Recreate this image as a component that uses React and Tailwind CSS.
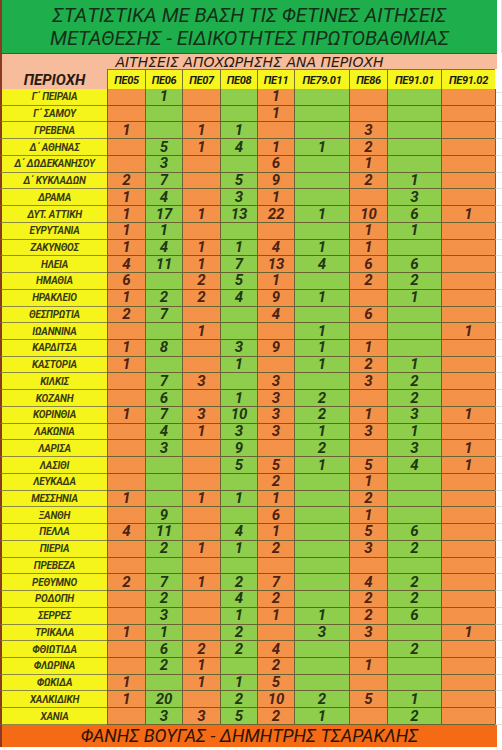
import React from "react";

const COLS = ["ΠΕ05", "ΠΕ06", "ΠΕ07", "ΠΕ08", "ΠΕ11", "ΠΕ79.01", "ΠΕ86", "ΠΕ91.01", "ΠΕ91.02"];

const ROWS = [
  ["Γ΄ ΠΕΙΡΑΙΑ", ",1,,,1,,,,"],
  ["Γ΄ ΣΑΜΟΥ", ",,,,1,,,,"],
  ["ΓΡΕΒΕΝΑ", "1,,1,1,,,3,,"],
  ["Δ΄ ΑΘΗΝΑΣ", ",5,1,4,1,1,2,,"],
  ["Δ΄ ΔΩΔΕΚΑΝΗΣΟΥ", ",3,,,6,,1,,"],
  ["Δ΄ ΚΥΚΛΑΔΩΝ", "2,7,,5,9,,2,1,"],
  ["ΔΡΑΜΑ", "1,4,,3,1,,,3,"],
  ["ΔΥΤ. ΑΤΤΙΚΗ", "1,17,1,13,22,1,10,6,1"],
  ["ΕΥΡΥΤΑΝΙΑ", "1,1,,,,,1,1,"],
  ["ΖΑΚΥΝΘΟΣ", "1,4,1,1,4,1,1,,"],
  ["ΗΛΕΙΑ", "4,11,1,7,13,4,6,6,"],
  ["ΗΜΑΘΙΑ", "6,,2,5,1,,2,2,"],
  ["ΗΡΑΚΛΕΙΟ", "1,2,2,4,9,1,,1,"],
  ["ΘΕΣΠΡΩΤΙΑ", "2,7,,,4,,6,,"],
  ["ΙΩΑΝΝΙΝΑ", ",,1,,,1,,,1"],
  ["ΚΑΡΔΙΤΣΑ", "1,8,,3,9,1,1,,"],
  ["ΚΑΣΤΟΡΙΑ", "1,,,1,,1,2,1,"],
  ["ΚΙΛΚΙΣ", ",7,3,,3,,3,2,"],
  ["ΚΟΖΑΝΗ", ",6,,1,3,2,,2,"],
  ["ΚΟΡΙΝΘΙΑ", "1,7,3,10,3,2,1,3,1"],
  ["ΛΑΚΩΝΙΑ", ",4,1,3,3,1,3,1,"],
  ["ΛΑΡΙΣΑ", ",3,,9,,2,,3,1"],
  ["ΛΑΣΙΘΙ", ",,,5,5,1,5,4,1"],
  ["ΛΕΥΚΑΔΑ", ",,,,2,,1,,"],
  ["ΜΕΣΣΗΝΙΑ", "1,,1,1,1,,2,,"],
  ["ΞΑΝΘΗ", ",9,,,6,,1,,"],
  ["ΠΕΛΛΑ", "4,11,,4,1,,5,6,"],
  ["ΠΙΕΡΙΑ", ",2,1,1,2,,3,2,"],
  ["ΠΡΕΒΕΖΑ", ",,,,,,,,"],
  ["ΡΕΘΥΜΝΟ", "2,7,1,2,7,,4,2,"],
  ["ΡΟΔΟΠΗ", ",2,,4,2,,2,2,"],
  ["ΣΕΡΡΕΣ", ",3,,1,1,1,2,6,"],
  ["ΤΡΙΚΑΛΑ", "1,1,,2,,3,3,,1"],
  ["ΦΘΙΩΤΙΔΑ", ",6,2,2,4,,,2,"],
  ["ΦΛΩΡΙΝΑ", ",2,1,,2,,1,,"],
  ["ΦΩΚΙΔΑ", "1,,1,1,5,,,,"],
  ["ΧΑΛΚΙΔΙΚΗ", "1,20,,2,10,2,5,1,"],
  ["ΧΑΝΙΑ", ",3,3,5,2,1,,2,"],
];

const GRID = "grid grid-cols-[107px_38px_37px_38px_37px_37px_55px_38px_54px_54px_minmax(0,1fr)]";

export default function App() {
  return (
    <div
      className="w-[502px] h-[750px] bg-white overflow-hidden"
      style={{ fontFamily: "Roboto, 'Noto Sans', sans-serif" }}
    >
      <div className="flex flex-col h-[747px]">
        {/* Title */}
        <div className="flex">
          <div className="w-[497px] h-[53px] bg-[#1fae4c] border-l-2 border-[#8a3a22] flex flex-col items-center justify-center text-[#14301a] italic text-[20px] leading-[23px]">
            <div>ΣΤΑΤΙΣΤΙΚΑ ΜΕ ΒΑΣΗ ΤΙΣ ΦΕΤΙΝΕΣ ΑΙΤΗΣΕΙΣ</div>
            <div>ΜΕΤΑΘΕΣΗΣ - ΕΙΔΙΚΟΤΗΤΕΣ ΠΡΩΤΟΒΑΘΜΙΑΣ</div>
          </div>
          <div className="flex-1 border-r border-[#e2e2e2]" />
        </div>
        {/* Subtitle */}
        <div className="flex">
          <div
            className="w-[497px] h-[16px] bg-[#f6bc9c] border-l-2 border-[#8a3a22] border-t border-[#7a5a40] flex items-center justify-center italic text-[14px] leading-none text-[#2a1a10]"
            style={{ fontFamily: "'DejaVu Sans', sans-serif" }}
          >
            ΑΙΤΗΣΕΙΣ ΑΠΟΧΩΡΗΣΗΣ ΑΝΑ ΠΕΡΙΟΧΗ
          </div>
          <div className="flex-1" />
        </div>
        {/* Column header */}
        <div className={`${GRID} h-[20px]`}>
          <div className="bg-[#f6bc9c] border-l-2 border-[#8a3a22] flex items-center justify-center italic font-bold text-[15px] text-[#2a1a10] border-b border-[#6b5a30]">
            ΠΕΡΙΟΧΗ
          </div>
          {COLS.map((c) => (
            <div
              key={c}
              className="bg-[#f6f61e] border-l border-b border-t border-[#7a7530] flex items-center justify-center italic font-bold text-[11px] text-[#1a1a10] tracking-[-0.3px]"
            >
              {c}
            </div>
          ))}
          <div className="border-b border-[#e2e2e2]" />
        </div>
        {/* Data */}
        <div className="flex flex-col h-[636px]">
          {ROWS.map(([name, vals]) => {
            const v = vals.split(",");
            return (
              <div key={name} className={`${GRID} flex-1 min-h-0`}>
                <div className="bg-[#f5f51c] border-l-2 border-[#8a3a22] border-b border-b-[#8a8a40] flex items-center justify-center italic font-bold text-[10px] text-[#3a3a12] tracking-[-0.2px]">
                  {name}
                </div>
                {COLS.map((c, i) => {
                  const orange = i % 2 === 0;
                  return (
                    <div
                      key={c}
                      className={`${
                        orange ? "bg-[#f59249] text-[#4a2412]" : "bg-[#8fcd4c] text-[#1e3812]"
                      } border-l border-b border-[#6a6433] flex items-center justify-center italic font-bold text-[15px] leading-none`}
                    >
                      {v[i]}
                    </div>
                  );
                })}
                <div className="border-l border-[#6a6433] border-b border-b-[#e2e2e2]" />
              </div>
            );
          })}
        </div>
        {/* Footer */}
        <div className="flex">
          <div className="w-[497px] h-[22px] bg-[#f56a14] border-l-2 border-[#8a3a22] flex items-center justify-center italic text-[18px] leading-none text-[#2a1408]">
            ΦΑΝΗΣ ΒΟΥΓΑΣ - ΔΗΜΗΤΡΗΣ ΤΣΑΡΑΚΛΗΣ
          </div>
          <div className="flex-1" />
        </div>
      </div>
    </div>
  );
}
